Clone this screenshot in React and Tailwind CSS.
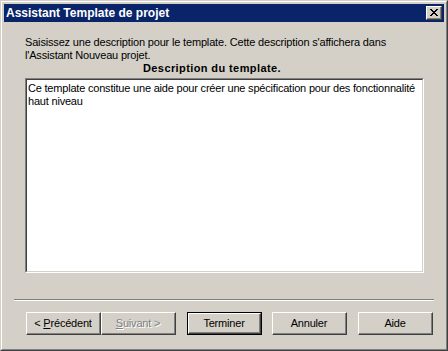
import React from 'react';

const font = { fontFamily: '"Liberation Sans", Arial, sans-serif' };

// bouton classique style Windows 2000
const WinButton = ({ children, disabled, isDefault, className = '' }) => (
  <div
    className={
      'w-[75px] h-[23px] ' +
      (isDefault ? 'border border-black ' : '') +
      className
    }
  >
    <div className="h-full border-t border-l border-t-white border-l-white border-r border-b border-r-[#404040] border-b-[#404040]">
      <div className="h-full flex items-center justify-center border-r border-b border-r-[#808080] border-b-[#808080]">
        <span
          className={
            'text-[11px] leading-none tracking-[-0.2px] ' +
            (disabled ? 'text-[#808080] [text-shadow:1px_1px_0_#ffffff]' : 'text-black')
          }
        >
          {children}
        </span>
      </div>
    </div>
  </div>
);

const App = () => {
  return (
    <div
      className="w-[448px] h-[351px] bg-[#d4d0c8] border border-t-[#d4d0c8] border-l-[#d4d0c8] border-r-[#404040] border-b-[#404040] select-none"
      style={font}
    >
      <div className="h-full border border-t-white border-l-white border-r-[#808080] border-b-[#808080] p-[2px] flex flex-col">
        {/* Barre de titre */}
        <div className="h-[18px] bg-[#0a246a] flex items-center justify-between pl-[2px] pr-[2px]">
          <span className="text-white font-bold text-[12px] leading-none">Assistant Template de projet</span>
          <div className="w-[16px] h-[14px] bg-[#d4d0c8] border-t border-l border-t-white border-l-white border-r border-b border-r-[#404040] border-b-[#404040]">
            <div className="w-full h-full border-r border-b border-r-[#808080] border-b-[#808080] flex items-center justify-center">
              <svg width="8" height="7" viewBox="0 0 8 7">
                <path d="M0 0h2v1h-2zM6 0h2v1h-2zM1 1h2v1h-2zM5 1h2v1h-2zM2 2h4v1h-4zM3 3h2v1h-2zM2 4h4v1h-4zM1 5h2v1h-2zM5 5h2v1h-2zM0 6h2v1h-2zM6 6h2v1h-2z" fill="#000" />
              </svg>
            </div>
          </div>
        </div>

        {/* Contenu */}
        <div className="flex-1 flex flex-col pt-[14px] pl-[21px] pr-[20px]">
          <p className="text-[11px] leading-[13px] text-black whitespace-nowrap tracking-[-0.17px]">
            Saisissez une description pour le template. Cette description s'affichera dans
            <br />
            l'Assistant Nouveau projet.
          </p>
          <div className="pl-[118px] text-[11px] leading-[13px] font-bold text-black tracking-[0.4px] whitespace-nowrap">
            Description du template.
          </div>
          <div className="mt-[3px] h-[195px] border-t border-l border-t-[#808080] border-l-[#808080] border-r border-b border-r-white border-b-white">
            <div className="h-full bg-white border-t border-l border-t-[#404040] border-l-[#404040] border-r border-b border-r-[#d4d0c8] border-b-[#d4d0c8] pl-[1px] pt-[2px]">
              <p className="text-[11px] leading-[13px] text-black whitespace-nowrap tracking-[-0.2px]">
                Ce template constitue une aide pour créer une spécification pour des fonctionnalité
                <br />
                haut niveau
              </p>
            </div>
          </div>
        </div>

        {/* Séparateur */}
        <div className="mx-[10px] border-t border-t-[#808080] border-b border-b-white" />

        {/* Boutons */}
        <div className="flex items-start pl-[22px] pt-[11px] pb-[12px]">
          <WinButton>
            &lt; <span className="underline">P</span>récédent
          </WinButton>
          <WinButton disabled>
            <span className="underline">S</span>uivant &gt;
          </WinButton>
          <WinButton isDefault className="ml-[11px]">Terminer</WinButton>
          <WinButton className="ml-[10px]">Annuler</WinButton>
          <WinButton className="ml-[11px]">Aide</WinButton>
        </div>
      </div>
    </div>
  );
};

export default App;
